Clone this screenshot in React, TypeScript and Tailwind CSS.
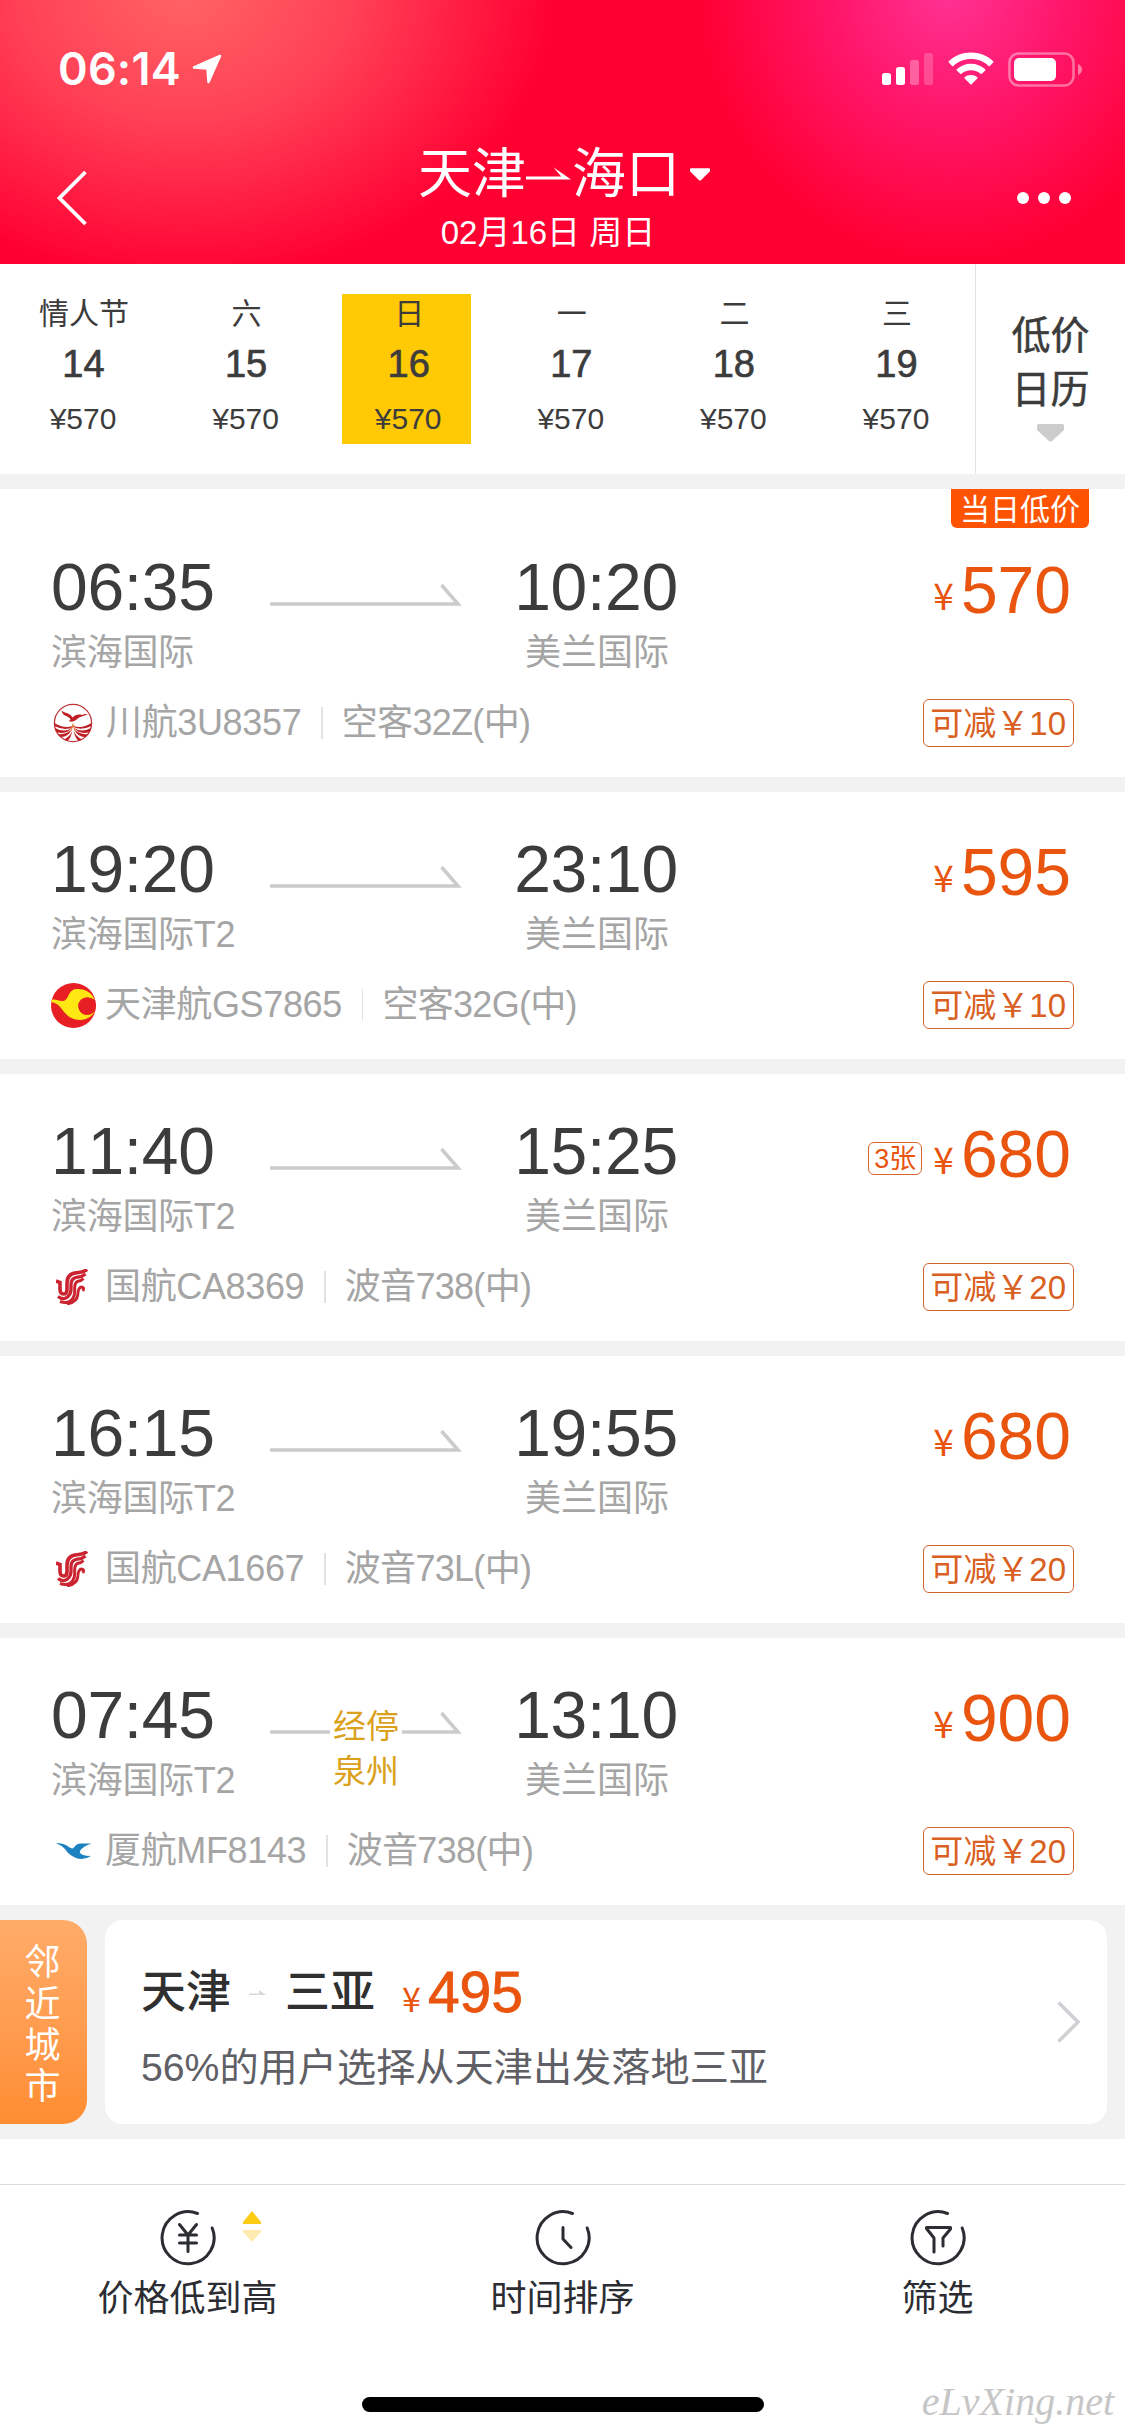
import type { ReactNode } from "react";

type Flight = {
  depart: string;
  arrive: string;
  from: string;
  to: string;
  logo: ReactNode;
  flightNo: string;
  plane: string;
  price: number;
  discount: number;
  lowest?: boolean;
  left?: string;
  stop?: string[];
};

/* ---------- airline logos ---------- */

function SichuanLogo() {
  return (
    <svg className="w-10 h-10 mr-[13px] ml-0.5" viewBox="0 0 40 40" fill="none">
      <circle cx="20" cy="20" r="18.6" stroke="#bf3437" strokeWidth="1.3" />
      <path d="M8.500 7.500 C12 10.500 17 9.500 19.500 14.500 C22 12 25 11 29 12 C31 11 33 10.500 35 11.500 C31 12.500 29 13.500 26 14.500 C23 17 20.500 20 15.500 18 C17 17.500 18 17 17 15.500 C14 12.500 9.500 13 8.500 7.500Z" fill="#bf2026" />
      <g fill="#bf2026">
        <path d="M1.500 20 Q12 26.500 20 22.500 Q28 26.500 38.500 20 L38.500 23 Q28 28 20.500 24 Q12 28.500 1.500 23Z" />
        <path d="M2 25 Q12 30 18.500 25 Q14 32 3 29Z" />
        <path d="M38 25 Q28 30 21.500 25 Q26 32 37 29Z" />
        <path d="M4.500 31 Q14 32 19 26 Q15 34.500 7.500 34Z" />
        <path d="M35.500 31 Q26 32 21 26 Q25 34.500 32.500 34Z" />
        <path d="M11 36.500 Q16.500 34 19.300 28 Q18 35 14.500 38Z" />
        <path d="M29 36.500 Q23.500 34 20.700 28 Q22 35 25.500 38Z" />
      </g>
      <path d="M17.500 28.500 L20 21.500 L22.500 28.500" stroke="#e08a4a" strokeWidth="1.200" />
    </svg>
  );
}

function TianjinLogo() {
  return (
    <svg className="w-[45px] h-[45px] mr-[9px]" viewBox="0 0 45 45">
      <circle cx="22.500" cy="22.500" r="22.500" fill="#e71f25" />
      <path d="M0.500 17 C4 15.500 8 18.500 12 18 C19 17 16 6.500 26 6 C34 5.500 41 10 44 17 C38 12.500 27.500 15 27.500 23 C27.500 32 38 35 44 28 C40 36 31 38 25 36.500 C17 35 14 30 10 25 C7 21 4 20 0.500 19Z" fill="#ffe713" />
      <circle cx="36" cy="23" r="8.700" fill="#e71f25" />
    </svg>
  );
}

function AirChinaLogo() {
  return (
    <svg className="w-8 h-9 ml-[5px] mr-[17px]" viewBox="0 0 32 36" fill="none" stroke="#cb2430">
      <path d="M0 12 L4 13.500 V20 Q4 25 7.500 25 Q11 25 11 20.500 V14 Q11 4.500 21 3.800 Q28 3.200 31 0.500" strokeWidth="3.600" />
      <path d="M2 27.500 Q7 31.500 11.500 28 Q15 25 15 20.500 V15.500 Q15 9 21.500 8.200 Q26 8 29.500 5" strokeWidth="3.300" />
      <path d="M4 32.500 Q12.500 35.500 16.500 30 Q18.700 27 18.700 23 V18 Q19 12.500 23 12 Q25 12 27.500 9.500" strokeWidth="3" />
      <path d="M11 35 Q21 33 21.800 26 Q22 18.500 25.500 18 Q29 18.500 26.800 22" strokeWidth="2.800" />
    </svg>
  );
}

function XiamenLogo() {
  return (
    <svg className="w-9 h-[18px] ml-[5px] mr-[13px]" viewBox="0 0 36 18">
      <path d="M0 1 Q8 1 13 5 Q16 7.500 18 5.500 Q20 2 24 1.500 H35.500 Q27 4 24 9 Q22.500 13.500 35 14 Q28 18.500 20 16 Q12 12.500 9.500 7.500 Q6 3.500 0 1Z" fill="#1d82c0" />
    </svg>
  );
}

/* ---------- data ---------- */

const DAYS = [
  { week: "情人节", day: 14 },
  { week: "六", day: 15 },
  { week: "日", day: 16, active: true },
  { week: "一", day: 17 },
  { week: "二", day: 18 },
  { week: "三", day: 19 },
];

const FLIGHTS: Flight[] = [
  { depart: "06:35", arrive: "10:20", from: "滨海国际",   to: "美兰国际", logo: <SichuanLogo />,  flightNo: "川航3U8357",   plane: "空客32Z(中)", price: 570, discount: 10, lowest: true },
  { depart: "19:20", arrive: "23:10", from: "滨海国际T2", to: "美兰国际", logo: <TianjinLogo />,  flightNo: "天津航GS7865", plane: "空客32G(中)", price: 595, discount: 10 },
  { depart: "11:40", arrive: "15:25", from: "滨海国际T2", to: "美兰国际", logo: <AirChinaLogo />, flightNo: "国航CA8369",   plane: "波音738(中)", price: 680, discount: 20, left: "3张" },
  { depart: "16:15", arrive: "19:55", from: "滨海国际T2", to: "美兰国际", logo: <AirChinaLogo />, flightNo: "国航CA1667",   plane: "波音73L(中)", price: 680, discount: 20 },
  { depart: "07:45", arrive: "13:10", from: "滨海国际T2", to: "美兰国际", logo: <XiamenLogo />,   flightNo: "厦航MF8143",   plane: "波音738(中)", price: 900, discount: 20, stop: ["经停", "泉州"] },
];

/* ---------- header ---------- */

function StatusBar() {
  return (
    <div className="flex items-center h-[138px] pl-[58px] pr-[43px]">
      <span className="font-['Inter'] font-semibold text-[45px] leading-[46px] tracking-[0.2px]">06:14</span>
      <svg className="w-[30px] h-[30px] ml-[11px]" viewBox="0 0 30 30">
        <path d="M28 2 L16.500 28 L15.500 14.500 L2 13.500Z" fill="#fff" stroke="#fff" strokeWidth="2.500" strokeLinejoin="round" />
      </svg>
      <svg className="w-[51px] h-[34px] ml-auto" viewBox="0 0 51 34" fill="#fff">
        <rect x="0" y="21" width="9" height="12" rx="2.500" />
        <rect x="14" y="15" width="9" height="18" rx="2.500" />
        <rect x="28" y="8" width="9" height="25" rx="2.500" opacity=".3" />
        <rect x="42" y="1" width="9" height="32" rx="2.500" opacity=".2" />
      </svg>
      <svg className="w-[46px] h-[34px] ml-[15px]" viewBox="0 0 46 34" fill="#fff">
        <path d="M23 0.500 C14.500 0.500 6.500 3.800 0.800 9.300 Q0.300 9.900 0.800 10.500 L4.200 13.900 Q4.800 14.400 5.400 13.900 C10 9.600 16.200 7.100 23 7.100 C29.800 7.100 36 9.600 40.600 13.900 Q41.200 14.400 41.800 13.900 L45.200 10.500 Q45.700 9.900 45.200 9.300 C39.500 3.800 31.500 0.500 23 0.500Z" />
        <path d="M23 11.700 C17.600 11.700 12.600 13.700 8.800 17.200 Q8.200 17.800 8.800 18.400 L12.200 21.800 Q12.800 22.300 13.400 21.800 C15.900 19.600 19.300 18.300 23 18.300 C26.700 18.300 30.100 19.600 32.600 21.800 Q33.200 22.300 33.800 21.800 L37.200 18.400 Q37.800 17.800 37.200 17.200 C33.400 13.700 28.400 11.700 23 11.700Z" />
        <path d="M23 22.900 C20.600 22.900 18.400 23.800 16.700 25.200 Q16.100 25.800 16.700 26.400 L22.400 32.200 Q23 32.700 23.600 32.200 L29.300 26.400 Q29.900 25.800 29.300 25.200 C27.600 23.800 25.400 22.900 23 22.900Z" />
      </svg>
      <svg className="w-[74px] h-[35px] ml-[14px]" viewBox="0 0 74 35">
        <rect x="1.500" y="1.500" width="64" height="32" rx="9" fill="none" stroke="#fff" strokeOpacity=".4" strokeWidth="2.600" />
        <rect x="6" y="6" width="42" height="23" rx="5" fill="#fff" />
        <path d="M70 12 Q74 14 74 17.500 Q74 21 70 23Z" fill="#fff" opacity=".45" />
      </svg>
    </div>
  );
}

function Header() {
  return (
    <header className="h-[264px] text-white bg-[radial-gradient(ellipse_370px_290px_at_185px_-10px,#ff6464_0%,#ff4156_45%,#ff003300_100%),radial-gradient(ellipse_250px_270px_at_950px_-10px,#ff3294_0%,#ff1466_50%,#ff003300_100%)] bg-[#ff0033]">
      <StatusBar />
      <div className="flex items-start justify-between pl-[57px] pr-[54px]">
        <svg className="w-8 h-14 mt-8" viewBox="0 0 32 56" fill="none" stroke="#fff" strokeWidth="3.800">
          <path d="M28.500 2 L2.500 28 L28.500 54" />
        </svg>
        <div className="flex flex-col items-center pl-[22px]">
          <div className="flex items-center text-[54px] leading-[72px]">
            <span>天津</span>
            <svg className="w-[46px] h-[14px]" viewBox="0 0 47 14">
              <path d="M0 9.500 H36 L28 0 L46 12.500 H0Z" fill="#fff" />
            </svg>
            <span>海口</span>
            <svg className="w-5 h-[13px] ml-[10px]" viewBox="0 0 21 13">
              <path d="M1 0 H20 Q21 0 21 1 V3 L11.500 12.500 Q10.500 13 9.500 12.500 L0 3 V1 Q0 0 1 0Z" fill="#fff" />
            </svg>
          </div>
          <div className="text-[33px] leading-[45px] pr-[32px]">02月16日 周日</div>
        </div>
        <div className="flex gap-[9px] mt-[54px]">
          <i className="size-3 rounded-full bg-white" />
          <i className="size-3 rounded-full bg-white" />
          <i className="size-3 rounded-full bg-white" />
        </div>
      </div>
    </header>
  );
}

function DateStrip() {
  return (
    <div className="flex h-[210px] text-[#3c3c3c]">
      <div className="flex gap-[33.6px] w-[975px] pl-[17px] pt-[30px]">
        {DAYS.map((d) => (
          <div
            key={d.day}
            className={`w-[129px] h-[150px] pl-[3px] flex flex-col items-center ${d.active ? "bg-[#ffc904]" : ""}`}
          >
            <div className="text-[30px] leading-10 pl-0.5">{d.week}</div>
            <div className="pl-px text-[38px] leading-[61px] [-webkit-text-stroke:0.7px_#3c3c3c]">{d.day}</div>
            <div className="text-[30px] leading-[48px]">¥570</div>
          </div>
        ))}
      </div>
      <div className="flex-1 border-l-[1.5px] border-[#e4e4e4] flex flex-col items-center pt-[45px] text-[39px] leading-[54px]">
        <span className="[-webkit-text-stroke:0.5px_#3c3c3c]">低价</span>
        <span className="[-webkit-text-stroke:0.5px_#3c3c3c]">日历</span>
        <svg className="w-[27px] h-[18px] mt-[7px]" viewBox="0 0 27 18">
          <path d="M1.500 0 H25.500 Q27 0 27 1.500 V6 L15 17 Q13.500 18 12 17 L0 6 V1.500 Q0 0 1.500 0Z" fill="#ccc" />
        </svg>
      </div>
    </div>
  );
}

/* ---------- flight rows ---------- */

function FlightRow({ f }: { f: Flight }) {
  return (
    <div className={`relative flex justify-between bg-white px-[51px] ${f.lowest ? "h-[288px] pt-[65px]" : "h-[267px] pt-11"}`}>
      {f.lowest && (
        <div className="absolute top-0 right-9 w-[138px] h-[39px] rounded-b-md bg-[#fe5301] text-white text-[30px] leading-[41px] text-center">
          当日低价
        </div>
      )}
      <div>
        <div className="flex">
          <div className="w-[219px]">
            <div className="text-[66px] leading-[66px] tracking-[-0.3px] text-[#3c3c3c]">{f.depart}</div>
            <div className="mt-2.5 text-4xl leading-[45px] tracking-[-0.3px] text-[#a5a5a5]">{f.from}</div>
          </div>
          <div className="relative">
            <svg className="w-48 h-6 mt-[29px]" viewBox="0 0 192 24" fill="none" stroke="#cbcbcb" strokeWidth="3.500">
              <path d="M0 21 H188 L171.500 2" />
            </svg>
            {f.stop && (
              <div className="absolute left-[60px] top-[22px] w-[72px] bg-white text-center text-[33px] leading-[45px] text-[#dba01c]">
                {f.stop.map((s) => <div key={s}>{s}</div>)}
              </div>
            )}
          </div>
          <div className="w-[268px] text-center">
            <div className="text-[66px] leading-[66px] tracking-[-0.3px] text-[#3c3c3c]">{f.arrive}</div>
            <div className="mt-2.5 pl-0.5 text-4xl leading-[45px] text-[#a5a5a5]">{f.to}</div>
          </div>
        </div>
        <div className="flex items-center h-[46px] mt-[25px] text-4xl leading-[46px] tracking-[-0.35px] text-[#a5a5a5]">
          {f.logo}
          <span>{f.flightNo}</span>
          <i className="w-[1.5px] h-8 ml-5 mr-[19px] bg-[#e2e2e2]" />
          <span className="tracking-[-0.7px]">{f.plane}</span>
        </div>
      </div>
      <div className="flex flex-col items-end text-[#e9550f]">
        <div className="flex items-center h-[66px] mt-[3px] pr-[3px]">
          {f.left && (
            <span className="h-[33px] px-[5px] mr-[11px] mt-[9px] border-[1.5px] border-[#d9642e] rounded-md text-[27px] leading-[33px]">{f.left}</span>
          )}
          <span className="font-['Noto_Sans_CJK_SC'] text-[37px] leading-[66px] mr-[7px] mt-[7px]">¥</span>
          <span className="text-[66px] leading-[66px]">{f.price}</span>
        </div>
        <div className="flex h-12 mt-[76px] pl-1.5 pr-[7px] border-[1.5px] border-[#d0642f] rounded-md text-[33px] leading-[47px] text-[#d95f22]">
          <span>可减￥</span>
          <span>{f.discount}</span>
        </div>
      </div>
    </div>
  );
}

function NearbyCity() {
  return (
    <div className="flex gap-[18px] py-[15px] pr-[18px] bg-[#f2f2f2]">
      <div className="w-[87px] h-[204px] pt-1.5 pr-0.5 rounded-r-3xl bg-linear-to-b from-[#ffac69] to-[#ff8d31] text-white text-4xl leading-[41.3px] flex flex-col items-center justify-center">
        <span>邻</span>
        <span>近</span>
        <span>城</span>
        <span>市</span>
      </div>
      <div className="flex flex-1 items-center justify-between h-[204px] rounded-[18px] bg-white pl-9 pr-[26px]">
        <div className="pt-[11px]">
          <div className="flex items-center h-[66px] text-[45px] text-[#303030] font-medium">
            <span>天津</span>
            <svg className="w-[17px] h-[6px] ml-[18px] mr-[19px]" viewBox="0 0 17 6">
              <path d="M0 3.500 H10 V0 L17 5 H0Z" fill="#d9d9d9" />
            </svg>
            <span>三亚</span>
            <span className="ml-[27px] mt-2.5 font-['Noto_Sans_CJK_SC'] font-normal text-[34px] leading-[54px] text-[#e9550f]">¥</span>
            <span className="ml-[7px] font-normal text-[57px] text-[#e9550f] [-webkit-text-stroke:0.8px_#e9550f]">495</span>
          </div>
          <div className="mt-[15px] text-[39.2px] leading-[54px] text-[#5f6066]">56%的用户选择从天津出发落地三亚</div>
        </div>
        <svg className="w-6 h-[42px]" viewBox="0 0 24 42" fill="none" stroke="#cfcfd4" strokeWidth="3.500">
          <path d="M1.500 1.500 L21 21 L1.500 40.500" />
        </svg>
      </div>
    </div>
  );
}

/* ---------- bottom tabs ---------- */

function TabIcon({ children }: { children: ReactNode }) {
  return (
    <svg className="size-[60px]" viewBox="0 0 60 60" fill="none" stroke="#2b2d33" strokeWidth="3" strokeLinecap="round" strokeLinejoin="round">
      <path d="M39.500 5.500 A26 26 0 1 0 54.200 20" />
      {children}
    </svg>
  );
}

function BottomBar() {
  return (
    <div className="relative mt-[45px] h-[252px] border-t-[1.5px] border-[#dcdcdc]">
      <div className="grid grid-cols-3 pt-[23px] text-[#2b2d33]">
        <div className="relative flex flex-col items-center">
          <TabIcon>
            <path d="M21.500 16.500 L30 27 L38.500 16.500 M30 27 V43.500 M21.500 27 H38.500 M21.500 35 H38.500" />
          </TabIcon>
          <svg className="absolute left-[243px] top-[3px] w-[18px] h-8" viewBox="0 0 18 32">
            <path d="M9 0 L18 11 V13 H0 V11Z" fill="#fccb13" />
            <path d="M0 19 H18 V21 L9 31 L0 21Z" fill="#ffebb0" />
          </svg>
          <div className="mt-2 text-4xl leading-[46px]">价格低到高</div>
        </div>
        <div className="flex flex-col items-center">
          <TabIcon>
            <path d="M30 19.500 V31 L38 39.500" />
          </TabIcon>
          <div className="mt-2 text-4xl leading-[46px]">时间排序</div>
        </div>
        <div className="flex flex-col items-center">
          <TabIcon>
            <path d="M26 44 V30 L18.500 20.500 V19.500 H42.500 V21 L35 30 V38" />
          </TabIcon>
          <div className="mt-2 text-4xl leading-[46px]">筛选</div>
        </div>
      </div>
      <div className="absolute left-[362px] top-[212px] w-[402px] h-[15px] rounded-full bg-black" />
      <div className="absolute right-[11px] top-[192px] font-['Liberation_Serif'] italic text-[40px] leading-[50px] text-[#c6c6c6]">
        eLvXing.net
      </div>
    </div>
  );
}

export default function App() {
  return (
    <div className="w-[1125px] h-[2436px] overflow-hidden bg-white font-['Liberation_Sans','Noto_Sans_CJK_SC',sans-serif] [font-kerning:none]">
      <Header />
      <DateStrip />
      <div className="flex flex-col gap-[15px] pt-[15px] bg-[#f2f2f2]">
        {FLIGHTS.map((f) => <FlightRow key={f.flightNo} f={f} />)}
      </div>
      <NearbyCity />
      <BottomBar />
    </div>
  );
}
